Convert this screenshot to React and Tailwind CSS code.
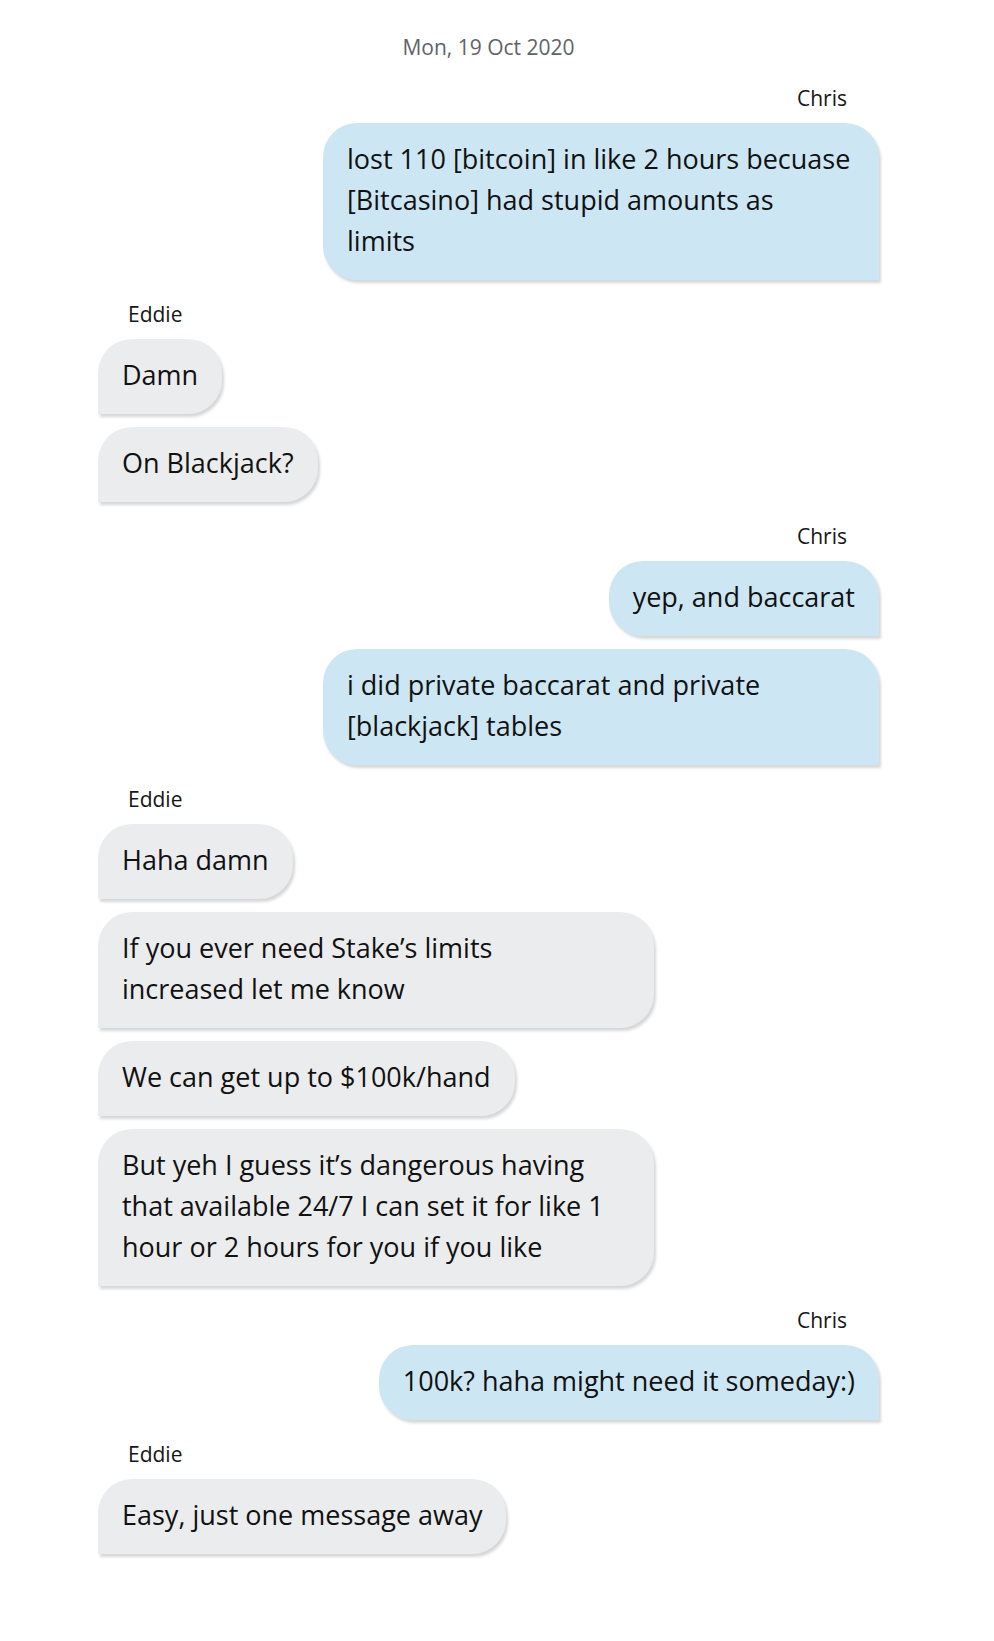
const groups = [
  {
    from: "Chris",
    me: true,
    msgs: [["lost 110 [bitcoin] in like 2 hours becuase", "[Bitcasino] had stupid amounts as", "limits"]],
  },
  { from: "Eddie", me: false, msgs: [["Damn"], ["On Blackjack?"]] },
  {
    from: "Chris",
    me: true,
    msgs: [["yep, and baccarat"], ["i did private baccarat and private", "[blackjack] tables"]],
  },
  {
    from: "Eddie",
    me: false,
    msgs: [
      ["Haha damn"],
      ["If you ever need Stake\u2019s limits", "increased let me know"],
      ["We can get up to $100k/hand"],
      [
        "But yeh I guess it\u2019s dangerous having",
        "that available 24/7 I can set it for like 1",
        "hour or 2 hours for you if you like",
      ],
    ],
  },
  { from: "Chris", me: true, msgs: [["100k? haha might need it someday:)"]] },
  { from: "Eddie", me: false, msgs: [["Easy, just one message away"]] },
];

function Bubble({ lines, me }) {
  const multi = lines.length > 1;
  return (
    <div
      className={`${multi ? "w-[556px]" : "w-fit"} px-6 pt-[15px] pb-[19px] text-[27px] leading-[41px] text-[#111111] shadow-[2px_3px_3px_rgba(0,0,0,0.16)] ${
        me
          ? "self-end bg-[#cde6f4] rounded-tl-[34px] rounded-tr-[34px] rounded-bl-[34px]"
          : "self-start bg-[#ebecee] rounded-tl-[34px] rounded-tr-[34px] rounded-br-[34px]"
      }`}
    >
      {lines.map((l, i) => (
        <span key={i} className="block whitespace-nowrap">
          {l}
        </span>
      ))}
    </div>
  );
}

export default function App() {
  return (
    <div
      className="min-h-screen bg-white"
      style={{ fontFamily: '"Open Sans", "Noto Sans", sans-serif' }}
    >
      <div className="ml-[98px] w-[781px] pt-[33px] pb-[86px] flex flex-col">
        {/* date */}
        <div className="mb-[3px] text-center text-[21px] leading-[28px] text-[#5f6368]">
          Mon, 19 Oct 2020
        </div>

        {groups.map((g, gi) => (
          <div key={gi} className="mt-[22px] flex flex-col gap-[13px]">
            <div
              className={`text-[21px] leading-[24px] text-[#161616] ${
                g.me ? "self-end pr-[32px]" : "self-start pl-[30px]"
              }`}
            >
              {g.from}
            </div>
            {g.msgs.map((m, mi) => (
              <Bubble key={mi} lines={m} me={g.me} />
            ))}
          </div>
        ))}
      </div>
    </div>
  );
}
